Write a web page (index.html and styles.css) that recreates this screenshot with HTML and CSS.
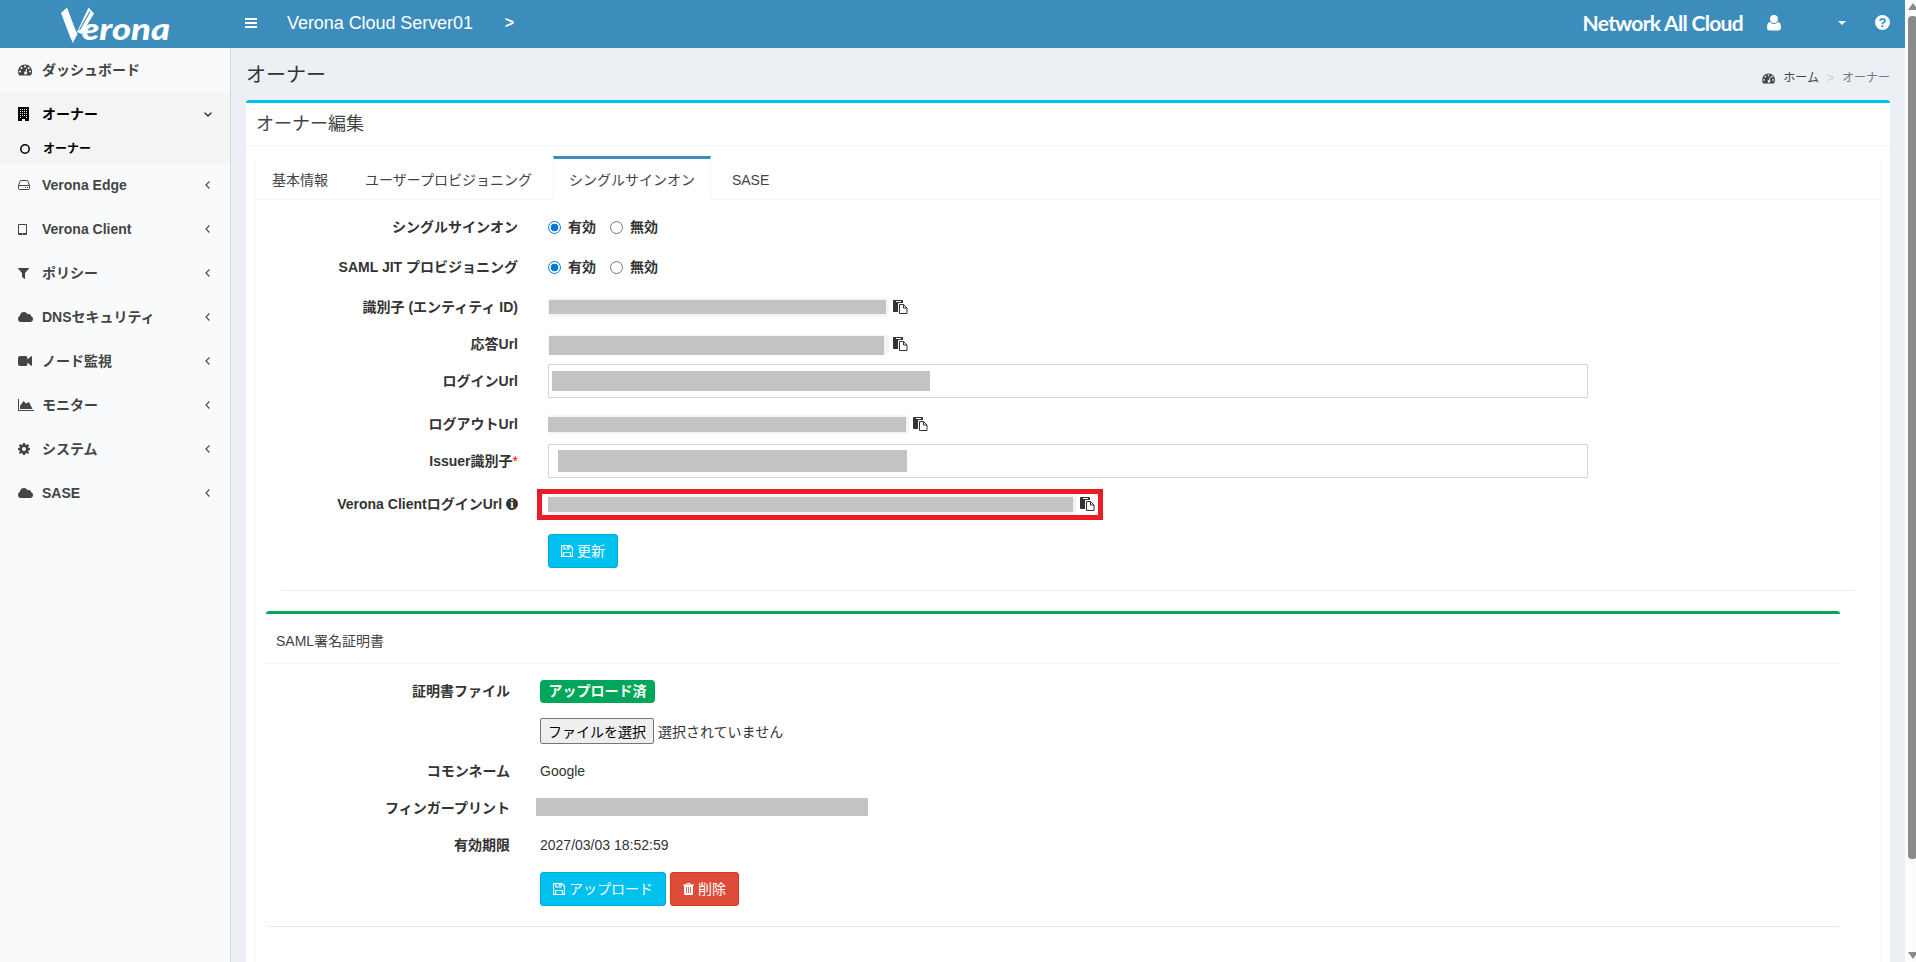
FILE: index.html
```html
<!DOCTYPE html>
<html lang="ja">
<head>
    <meta charset="UTF-8">
    <meta name="viewport" content="width=device-width, initial-scale=1.0">
    <title>オーナー | Verona Cloud Server01</title>
    <link rel="stylesheet" href="styles.css">
</head>

<body>

<!-- icon set, 14px grid -->
<svg class="icon-defs" xmlns="http://www.w3.org/2000/svg">
    <symbol id="i-dashboard" viewBox="0 0 14 12">
        <path fill-rule="evenodd" d="M7 .5a7 7 0 0 0-7 7c0 1.4.4 2.700 1.100 3.800.1.2.3.2.4.2h11c.2 0 .3 0 .4-.2A7 7 0 0 0 7 .5zM2 6.500a1 1 0 1 1 0 2 1 1 0 0 1 0-2zM3.500 3a1 1 0 1 1 0 2 1 1 0 0 1 0-2zM7 1.500a1 1 0 1 1 0 2 1 1 0 0 1 0-2zM8.400 4.400l.9.3-.8 3.100a1.500 1.500 0 1 1-1-.3zM10.700 3a1 1 0 1 1 0 2 1 1 0 0 1 0-2zM12 6.500a1 1 0 1 1 0 2 1 1 0 0 1 0-2z"/>
    </symbol>
    <symbol id="i-building" viewBox="0 0 11 14">
        <path fill-rule="evenodd" d="M.5 0h10l.5.5v13l-.5.5H7v-2H4v2H.5l-.5-.5V.5zM2 2v1h1V2zm2 0v1h1V2zm2 0v1h1V2zm2 0v1h1V2zM2 4v1h1V4zm2 0v1h1V4zm2 0v1h1V4zm2 0v1h1V4zM2 6v1h1V6zm2 0v1h1V6zm2 0v1h1V6zm2 0v1h1V6zM2 8v1h1V8zm2 0v1h1V8zm2 0v1h1V8zm2 0v1h1V8zM2 10v1h1v-1zm6 0v1h1v-1z"/>
    </symbol>
    <symbol id="i-circle" viewBox="0 0 10 10">
        <circle cx="5" cy="5" r="4.200" fill="none" stroke="currentColor" stroke-width="1.500"/>
    </symbol>
    <symbol id="i-hdd" viewBox="0 0 12 10">
        <path d="M.5 5.500h11M.5 5.500v3q0 1 1 1h9q1 0 1-1v-3L9.900 1.200Q9.700.5 9 .5H3Q2.300.5 2.100 1.200z" fill="none" stroke="currentColor"/>
        <path d="M7 7h1v1H7zM9 7h1v1H9z"/>
    </symbol>
    <symbol id="i-tablet" viewBox="0 0 9 11">
        <path fill-rule="evenodd" d="M1 0h7q1 0 1 1v9q0 1-1 1H1q-1 0-1-1V1q0-1 1-1zM1 1v8h7V1zM4 9.600v.8h1v-.8z"/>
    </symbol>
    <symbol id="i-filter" viewBox="0 0 11 11">
        <path d="M.3 0h10.400q.5.3.2.8L7 4.900V10.600q-.3.500-.8.200L4.200 9 4 8.600V4.900L.1.800Q-.1.300.3 0z"/>
    </symbol>
    <symbol id="i-cloud" viewBox="0 0 15 10">
        <path d="M3.500 10A3.300 3.300 0 0 1 0 6.800C0 5.400.8 4.300 2 3.800 2 1.600 3.800 0 6 0c1.700 0 3 .9 3.700 2.400.4-.3.800-.4 1.300-.4 1.200 0 2.100 1 2 2.200 1.200.3 2 1.400 2 2.700 0 1.700-1.300 3.100-3 3.100z"/>
    </symbol>
    <symbol id="i-video" viewBox="0 0 14 10">
        <path d="M2 0h5.500Q9.500 0 9.500 2v1.500L13 .300q.5-.3 1 .2v9q-.5.500-1 .2L9.500 6.500V8q0 2-2 2H2Q0 10 0 8V2Q0 0 2 0z"/>
    </symbol>
    <symbol id="i-chart" viewBox="0 0 16 12">
        <path d="M0 0h1v11h15v1H0zM2 10V7l3.500-5L8 4.600 11 3l3.500 7z"/>
    </symbol>
    <symbol id="i-cog" viewBox="0 0 12 12">
        <path fill-rule="evenodd" d="M5 0h2l.4 1.700.9.4L9.800 1.100l1.300 1.300-1 1.500.4.900L12 5v2l-1.600.4-.3.800 1 1.500-1.300 1.400-1.500-1-.9.400L7 12H5l-.4-1.500-.9-.4-1.500 1L.9 9.700l1-1.500-.3-.8L0 7V5l1.600-.3.300-.8-1-1.500 1.300-1.300 1.500 1 .9-.4zM6 4a2 2 0 1 0 0 4 2 2 0 0 0 0-4z"/>
    </symbol>
    <symbol id="i-left" viewBox="0 0 5 8">
        <path d="M4.400.5L1 4l3.400 3.500" fill="none" stroke="currentColor" stroke-width="1.100"/>
    </symbol>
    <symbol id="i-down" viewBox="0 0 8 5">
        <path d="M.5.6L4 4 7.500.6" fill="none" stroke="currentColor" stroke-width="1.100"/>
    </symbol>
    <symbol id="i-user" viewBox="0 0 14 16">
        <path d="M7 0a4 4 0 1 1 0 8 4 4 0 0 1 0-8zM3 7q1.600 1.900 4 1.900T11 7c2.200.3 3 2.600 3 5.500 0 1.800-1 3-2.600 3H2.600C1 15.500 0 14.300 0 12.500 0 9.600.8 7.300 3 7z"/>
    </symbol>
    <symbol id="i-paste" viewBox="0 0 15 14">
        <path fill-rule="evenodd" d="M.6 0h8.800l.6.6V3H6.100Q5 3 5 4v8H.6L0 11.400V.6zM3 1v1h5V1z"/>
        <path d="M6.500 4.500h4l3.500 3.500v5.500H6.500zM10.500 4.500V8H14" fill="none" stroke="currentColor"/>
    </symbol>
    <symbol id="i-save" viewBox="0 0 12 12">
        <path d="M.5.5h8.300l2.700 2.700v8.300H.5zM3 .5v3.500h5V.5M2.500 11.500v-4h7v4M6.500 1v2" fill="none" stroke="currentColor" stroke-width="1.200"/>
    </symbol>
    <symbol id="i-trash" viewBox="0 0 11 12">
        <path fill-rule="evenodd" d="M4 0h3l.8 1.500H11v1h-1V11q-.2 1-1 1H2q-.8 0-1-1V2.500H0v-1h3.200zM4.400 1l-.3.500h2.800L6.600 1zM3 4v6h.8V4zm2.100 0v6h.8V4zm2.100 0v6H8V4z"/>
    </symbol>
</svg>

<div class="page">

    <div class="wrapper">

        <header class="main-header">
            <a class="logo" href="#">
                <svg width="112" height="40" viewBox="58 5 112 40" fill="#fff">
                    <path d="M61 13L67 7.500 74.500 27.500 77.500 34 72.800 43 69.800 36z"/>
                    <path d="M88.500 7.500L94 13.500 81.500 34 77 32z"/>
                    <path d="M90 11.500L79.500 30" stroke="#3c8dbc" stroke-width="1.200"/>
                    <text class="logo-text" x="81.500" y="39.500" textLength="88.500" lengthAdjust="spacingAndGlyphs">erona</text>
                </svg>
            </a>
            <nav class="navbar">
                <a class="toggle" href="#"><span></span><span></span><span></span></a>
                <span class="server">Verona Cloud Server01</span>
                <span class="server-arrow">&gt;</span>
                <div class="navbar-right">
                    <span class="brand">Network All Cloud</span>
                    <svg class="nav-user"><use href="#i-user"/></svg>
                    <span class="caret"></span>
                    <span class="help">?</span>
                </div>
            </nav>
        </header>

        <div class="columns">

            <aside class="sidebar">
                <a class="item" href="#"><svg width="14" height="12"><use href="#i-dashboard"/></svg><span>ダッシュボード</span></a>
                <div class="active">
                    <a class="item" href="#"><svg width="11" height="14"><use href="#i-building"/></svg><span>オーナー</span><svg class="arrow arrow-down"><use href="#i-down"/></svg></a>
                    <a class="item subitem" href="#"><svg width="10" height="10"><use href="#i-circle"/></svg><span>オーナー</span></a>
                </div>
                <a class="item" href="#"><svg width="12" height="10"><use href="#i-hdd"/></svg><span>Verona Edge</span><svg class="arrow"><use href="#i-left"/></svg></a>
                <a class="item" href="#"><svg width="9" height="11"><use href="#i-tablet"/></svg><span>Verona Client</span><svg class="arrow"><use href="#i-left"/></svg></a>
                <a class="item" href="#"><svg width="11" height="11"><use href="#i-filter"/></svg><span>ポリシー</span><svg class="arrow"><use href="#i-left"/></svg></a>
                <a class="item" href="#"><svg width="15" height="10"><use href="#i-cloud"/></svg><span>DNSセキュリティ</span><svg class="arrow"><use href="#i-left"/></svg></a>
                <a class="item" href="#"><svg width="14" height="10"><use href="#i-video"/></svg><span>ノード監視</span><svg class="arrow"><use href="#i-left"/></svg></a>
                <a class="item" href="#"><svg width="16" height="12"><use href="#i-chart"/></svg><span>モニター</span><svg class="arrow"><use href="#i-left"/></svg></a>
                <a class="item" href="#"><svg width="12" height="12"><use href="#i-cog"/></svg><span>システム</span><svg class="arrow"><use href="#i-left"/></svg></a>
                <a class="item" href="#"><svg width="15" height="10"><use href="#i-cloud"/></svg><span>SASE</span><svg class="arrow"><use href="#i-left"/></svg></a>
            </aside>

            <main class="content">

                <div class="content-header">
                    <h1>オーナー</h1>
                    <div class="breadcrumb">
                        <svg width="13" height="11"><use href="#i-dashboard"/></svg>
                        <a href="#">ホーム</a>
                        <span class="sep">&gt;</span>
                        <span>オーナー</span>
                    </div>
                </div>

                <section class="box">
                    <h3 class="box-title">オーナー編集</h3>

                    <div class="tabs-custom">
                        <ul class="tabs">
                            <li><a href="#">基本情報</a></li>
                            <li><a href="#">ユーザープロビジョニング</a></li>
                            <li class="current"><a href="#">シングルサインオン</a></li>
                            <li><a href="#">SASE</a></li>
                        </ul>

                        <form class="form">
                            <div class="row gap-m">
                                <label class="name">シングルサインオン</label>
                                <label class="radio"><input type="radio" name="sso" checked>有効</label>
                                <label class="radio"><input type="radio" name="sso">無効</label>
                            </div>
                            <div class="row gap-m">
                                <label class="name">SAML JIT プロビジョニング</label>
                                <label class="radio"><input type="radio" name="jit" checked>有効</label>
                                <label class="radio"><input type="radio" name="jit">無効</label>
                            </div>
                            <div class="row gap-s">
                                <label class="name">識別子 (エンティティ ID)</label>
                                <code class="code-entity"><span class="mask"></span></code>
                                <svg class="copy"><use href="#i-paste"/></svg>
                            </div>
                            <div class="row gap-s">
                                <label class="name">応答Url</label>
                                <code class="code-reply"><span class="mask"></span></code>
                                <svg class="copy"><use href="#i-paste"/></svg>
                            </div>
                            <div class="row gap-l">
                                <label class="name">ログインUrl</label>
                                <div class="input input-login"><span class="mask"></span></div>
                            </div>
                            <div class="row gap-s">
                                <label class="name">ログアウトUrl</label>
                                <code class="code-logout"><span class="mask"></span></code>
                                <svg class="copy"><use href="#i-paste"/></svg>
                            </div>
                            <div class="row gap-l">
                                <label class="name">Issuer識別子<span class="required">*</span></label>
                                <div class="input input-issuer"><span class="mask"></span></div>
                            </div>
                            <div class="row gap-xl">
                                <label class="name">Verona ClientログインUrl <span class="info">i</span></label>
                                <div class="highlight">
                                    <code class="code-client"><span class="mask"></span></code>
                                    <svg class="copy"><use href="#i-paste"/></svg>
                                </div>
                            </div>
                            <div class="row">
                                <span class="name"></span>
                                <button type="button" class="btn btn-info"><svg width="12" height="12"><use href="#i-save"/></svg>更新</button>
                            </div>
                        </form>

                        <hr>

                        <section class="cert">
                            <h4 class="cert-title">SAML署名証明書</h4>
                            <div class="row gap-m">
                                <label class="name">証明書ファイル</label>
                                <span class="label-success">アップロード済</span>
                            </div>
                            <div class="row gap-m">
                                <span class="name"></span>
                                <button type="button" class="file">ファイルを選択</button>
                                <span class="file-name">選択されていません</span>
                            </div>
                            <div class="row gap-s">
                                <label class="name">コモンネーム</label>
                                <span>Google</span>
                            </div>
                            <div class="row gap-s">
                                <label class="name">フィンガープリント</label>
                                <span class="mask mask-fingerprint"></span>
                            </div>
                            <div class="row gap-x">
                                <label class="name">有効期限</label>
                                <span>2027/03/03 18:52:59</span>
                            </div>
                            <div class="row">
                                <span class="name"></span>
                                <button type="button" class="btn btn-info"><svg width="12" height="12"><use href="#i-save"/></svg>アップロード</button>
                                <button type="button" class="btn btn-danger"><svg width="11" height="12"><use href="#i-trash"/></svg>削除</button>
                            </div>
                        </section>
                    </div>
                </section>
            </main>
        </div>
    </div>

    <div class="scrollbar">
        <span class="scroll-up"></span>
        <span class="scroll-thumb"></span>
        <span class="scroll-down"></span>
    </div>

</div>

</body>
</html>
```
FILE: styles.css
```css
* {
    box-sizing: border-box;
}

body {
    margin: 0;
    overflow: hidden;
    font-family: "Liberation Sans", "Noto Sans CJK JP", sans-serif;
    font-size: 14px;
    line-height: 20px;
    color: #333;
}

a {
    color: inherit;
    text-decoration: none;
}

svg {
    flex: none;
    fill: currentColor;
}

.icon-defs {
    display: none;
}

.page {
    display: flex;
    height: 962px;
    overflow: hidden;
}

.wrapper {
    flex: 1;
    min-width: 0;
    background: #ecf0f5;
}

/* header */

.main-header {
    display: flex;
    height: 48px;
    background: #3c8dbc;
    color: #fff;
}

.logo {
    width: 230px;
    padding: 5px 0 0 58px;
}

.logo-text {
    font-family: Lato, sans-serif;
    font-size: 31px;
    font-weight: 900;
    font-style: italic;
}

.navbar {
    flex: 1;
    display: flex;
    align-items: center;
    height: 46px;
    padding-left: 15px;
    font-size: 18px;
}

.toggle {
    display: flex;
    flex-direction: column;
    gap: 2px;
    width: 12px;
    margin-right: 30px;
}

.toggle span {
    height: 2px;
    background: #fff;
}

.server {
    letter-spacing: -0.06px;
}

.server-arrow {
    margin-left: 32px;
    font-size: 16px;
    font-weight: bold;
}

.navbar-right {
    display: flex;
    align-items: center;
    margin-left: auto;
    padding-right: 15px;
}

.brand {
    margin-right: 24px;
    font-family: Lato, sans-serif;
    font-size: 21px;
    font-weight: bold;
    letter-spacing: -0.68px;
}

.nav-user {
    width: 14px;
    height: 16px;
    margin-right: 57px;
}

.caret {
    margin-right: 29px;
    border-top: 4px solid #fff;
    border-left: 4px solid transparent;
    border-right: 4px solid transparent;
}

.help {
    width: 15px;
    height: 15px;
    margin-top: -2px;
    border-radius: 50%;
    background: #fff;
    color: #3c8dbc;
    font-size: 13px;
    font-weight: bold;
    line-height: 15px;
    text-align: center;
}

/* sidebar */

.columns {
    display: flex;
    height: 914px;
}

.sidebar {
    width: 231px;
    border-right: 1px solid #d2d6de;
    background: #f9fafc;
    color: #444;
    font-weight: bold;
}

.item {
    display: grid;
    grid-template-columns: 24px 1fr auto;
    align-items: center;
    height: 44px;
    padding: 0 20px 0 18px;
}

.active {
    background: #f4f4f5;
    color: #000;
}

.subitem {
    height: 27px;
    grid-template-columns: 23px 1fr;
    padding: 0 20px 2px 20px;
    font-size: 12px;
}

.arrow {
    width: 5px;
    height: 8px;
}

.arrow-down {
    width: 8px;
    height: 5px;
    margin-right: -2px;
}

/* content */

.content {
    flex: 1;
    padding: 0 15px;
}

.content-header {
    display: flex;
    justify-content: space-between;
    height: 52px;
}

.content-header h1 {
    margin: 17px 0 0;
    font-size: 20px;
    font-weight: normal;
    line-height: 20px;
}

.breadcrumb {
    display: flex;
    align-items: center;
    height: 20px;
    margin-top: 20px;
    font-size: 12px;
    color: #777;
}

.breadcrumb svg {
    margin-right: 8px;
    color: #444;
}

.breadcrumb a {
    color: #444;
}

.breadcrumb .sep {
    margin: 0 8px;
    color: #ccc;
}

.box {
    height: 900px;
    border-top: 3px solid #00c0ef;
    border-radius: 3px 3px 0 0;
    background: #fff;
}

.box-title {
    height: 43px;
    margin: 0 0 10px;
    padding: 11px 10px 0;
    border-bottom: 1px solid #f4f4f4;
    font-size: 18px;
    font-weight: normal;
    line-height: 20px;
    color: #444;
}

.tabs-custom {
    height: 900px;
    margin: 0 9px;
    border-left: 1px solid #fafafa;
    border-right: 1px solid #fafafa;
}

.tabs {
    display: flex;
    gap: 5px;
    height: 44px;
    margin: 0;
    padding: 0;
    border-bottom: 1px solid #f4f4f4;
    list-style: none;
    color: #444;
}

.tabs li {
    height: 44px;
    padding: 11px 15px 0;
    border: 1px solid transparent;
    border-top: 3px solid transparent;
    border-bottom: 0;
}

.tabs .current {
    border-color: #3c8dbc #f4f4f4;
    background: #fff;
}

/* form rows */

.form {
    padding: 10px 0 0;
}

.row {
    display: flex;
    align-items: center;
    height: 34px;
}

.gap-s {
    margin-bottom: 3px;
}

.gap-m {
    margin-bottom: 6px;
}

.gap-l {
    margin-bottom: 9px;
}

.gap-x {
    margin-bottom: 10px;
}

.gap-xl {
    margin-bottom: 13px;
}

.name {
    width: 262px;
    margin-right: 30px;
    text-align: right;
    font-weight: bold;
    white-space: nowrap;
}

.required {
    color: #f00;
    font-weight: normal;
}

.info {
    display: inline-block;
    width: 12px;
    height: 12px;
    border-radius: 50%;
    background: #333;
    color: #fff;
    font-family: "Liberation Serif", serif;
    font-size: 12px;
    line-height: 12px;
    text-align: center;
    vertical-align: 1px;
}

.radio {
    display: flex;
    align-items: center;
    margin-right: 13px;
    font-weight: bold;
}

.radio input {
    appearance: none;
    width: 13px;
    height: 13px;
    margin: 1px 7px 0 1px;
    border: 1px solid #767676;
    border-radius: 50%;
    background: #fff;
}

.name + .radio {
    margin-left: -1px;
}

.radio input:checked {
    border-color: #0078d7;
    background: radial-gradient(#0078d7 3.500px, #fff 4.200px);
}

.mask {
    display: block;
    background: #c3c3c3;
}

code {
    height: 19px;
    border-radius: 4px;
    background: #f9f2f4;
}

.code-entity,
.code-reply {
    width: 341px;
    padding: 2px 0 0 1px;
}

.code-entity .mask {
    width: 337px;
    height: 14px;
}

.code-reply {
    padding-top: 1px;
}

.code-reply .mask {
    width: 335px;
    height: 19px;
}

.code-logout {
    width: 361px;
    padding-top: 2px;
}

.code-logout .mask {
    width: 358px;
    height: 15px;
}

.code-client {
    width: 528px;
    padding-top: 2px;
}

.code-client .mask {
    width: 525px;
    height: 15px;
}

.copy {
    width: 15px;
    height: 14px;
    margin-left: 4px;
}

.input {
    width: 1040px;
    height: 34px;
    border: 1px solid #d2d6de;
}

.input-login {
    padding: 6px 3px;
}

.input-login .mask {
    width: 378px;
    height: 20px;
}

.input-issuer {
    padding: 5px 9px;
}

.input-issuer .mask {
    width: 349px;
    height: 22px;
}

.highlight {
    display: flex;
    align-items: center;
    width: 566px;
    height: 31px;
    margin-left: -11px;
    padding-left: 6px;
    border: 5px solid #ed1c24;
}

.btn {
    display: flex;
    align-items: center;
    gap: 4px;
    height: 34px;
    margin-right: 4px;
    padding: 0 12px;
    border: 1px solid #00acd6;
    border-radius: 3px;
    background: #00c0ef;
    color: #fff;
    font: inherit;
}

.btn-danger {
    border-color: #d73925;
    background: #dd4b39;
}

hr {
    height: 1px;
    margin: 22px 25px 20px;
    border: 0;
    background: #eee;
}

/* certificate box */

.cert {
    width: 1574px;
    height: 315px;
    margin-left: 10px;
    border-top: 3px solid #00a65a;
    border-radius: 3px;
    box-shadow: 0 1px 1px rgba(0, 0, 0, 0.1);
}

.cert-title {
    height: 50px;
    margin: 0 0 10px;
    padding: 17px 10px 0;
    border-bottom: 1px solid #f4f4f4;
    font-size: 14px;
    font-weight: normal;
    line-height: 20px;
    color: #444;
}

.cert .name {
    width: 244px;
    margin-right: 30px;
}

.label-success {
    height: 23px;
    padding: 0 8.500px;
    border-radius: 4px;
    background: #00a65a;
    color: #fff;
    font-weight: bold;
    line-height: 22px;
}

.file {
    height: 26px;
    padding: 1px 7px 0;
    border: 1px solid #767676;
    border-radius: 2px;
    background: #efefef;
    color: #000;
    font: inherit;
}

.file-name {
    margin-left: 4px;
    padding-top: 1px;
}

.mask-fingerprint {
    width: 332px;
    height: 18px;
    margin: -2px 0 0 -4px;
}

/* scrollbar */

.scrollbar {
    display: flex;
    flex-direction: column;
    width: 11px;
    height: 962px;
    padding: 3px 0 3px 3px;
    overflow: hidden;
    background: #fcfcfc;
}

.scroll-up,
.scroll-down {
    width: 0;
    border-left: 5px solid transparent;
    border-right: 5px solid transparent;
}

.scroll-up {
    border-bottom: 7px solid #8b8b8b;
}

.scroll-thumb {
    width: 9px;
    height: 843px;
    margin-top: 6px;
    border-radius: 4px;
    background: #8b8b8b;
}

.scroll-down {
    margin-top: auto;
    border-top: 7px solid #8b8b8b;
}
```
